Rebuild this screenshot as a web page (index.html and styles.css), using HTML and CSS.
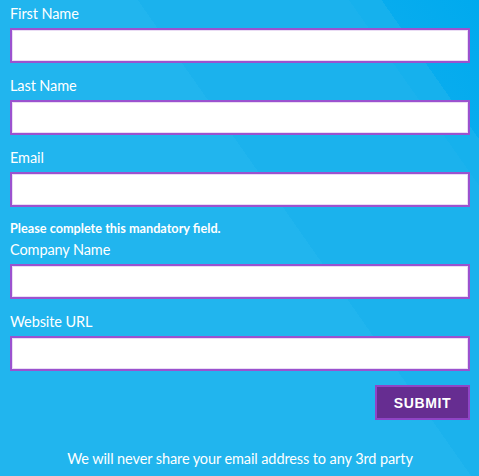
FILE: index.html
```html
<!DOCTYPE html>
<html lang="en">
<head>
  <meta charset="UTF-8">
  <title>Contact Form</title>
  <link rel="stylesheet" href="styles.css">
</head>
<body>

  <form class="signup-form">
    <div class="field">
      <label for="firstname">First Name</label>
      <input type="text" id="firstname">
    </div>

    <div class="field">
      <label for="lastname">Last Name</label>
      <input type="text" id="lastname">
    </div>

    <div class="field has-error">
      <label for="email">Email</label>
      <input type="email" id="email">
      <div class="error">Please complete this mandatory field.</div>
    </div>

    <div class="field">
      <label for="company">Company Name</label>
      <input type="text" id="company">
    </div>

    <div class="field">
      <label for="website">Website URL</label>
      <input type="text" id="website">
    </div>

    <div class="actions">
      <button type="button">Submit</button>
    </div>

    <p class="privacy">We will never share your email address to any 3rd party</p>
  </form>

</body>
</html>
```

FILE: styles.css
```css
* {
  margin: 0;
  padding: 0;
  box-sizing: border-box;
}

html, body {
  height: 100%;
}

body {
  font-family: 'Lato', 'Open Sans', sans-serif;
  color: #ffffff;
  background: linear-gradient(55deg, #21b5ee 0%, #21b5ee 58%, #1bb2ed 58%, #1bb2ed 84%, #16b1ed 84%, #16b1ed 88%, #07acee 88%, #00aaee 100%);
  overflow: hidden;
}

.signup-form {
  width: 460px;
  margin-left: 10px;
  padding-top: 4px;
}

.field {
  margin-bottom: 13px;
}

.field.has-error {
  margin-bottom: 3px;
}

.field label {
  display: block;
  font-size: 14.5px;
  line-height: 20px;
  letter-spacing: -0.1px;
  margin-bottom: 4px;
}

.field input {
  display: block;
  width: 100%;
  height: 35px;
  background: #ffffff;
  border: 2px solid #9b52cf;
  box-shadow: inset 0 0 0 1px #eadcf4;
  outline: none;
}

.error {
  margin-top: 12px;
  font-size: 12.7px;
  font-weight: bold;
  line-height: 18px;
}

.actions {
  display: flex;
  justify-content: flex-end;
  margin-top: 14px;
}

.actions button {
  width: 95px;
  height: 35px;
  background: #662d91;
  border: 2px solid #8f45c5;
  color: #ffffff;
  font-family: 'Liberation Sans', Arial, sans-serif;
  font-size: 14px;
  font-weight: bold;
  letter-spacing: 0.6px;
  text-transform: uppercase;
  cursor: pointer;
}

.privacy {
  margin-top: 29px;
  text-align: center;
  font-size: 14.5px;
  line-height: 20px;
  letter-spacing: -0.1px;
}
```
